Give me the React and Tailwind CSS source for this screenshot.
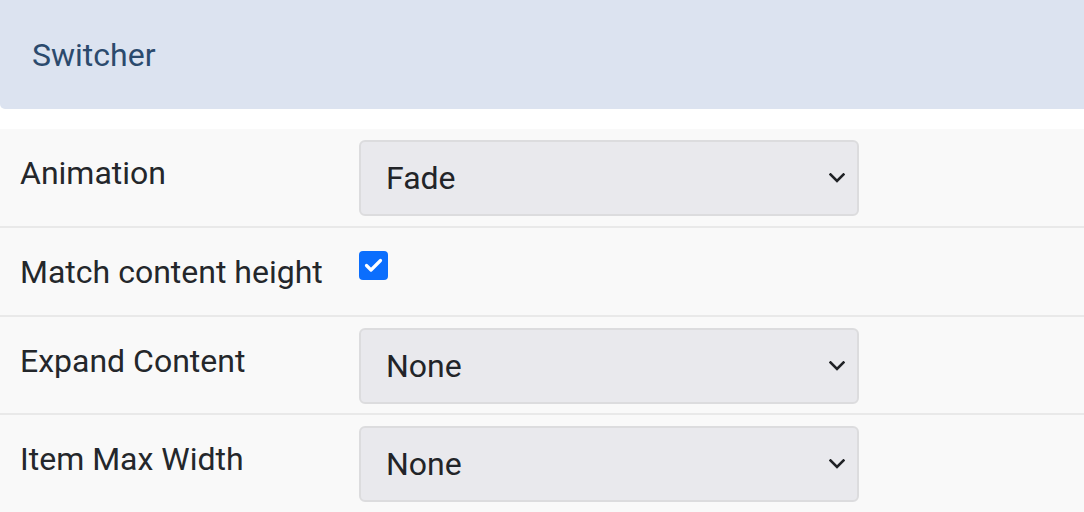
import React from "react";

function Chevron() {
  return (
    <svg width="16" height="10" viewBox="0 0 16 10" className="absolute right-[12px] top-1/2 -translate-y-1/2" fill="none">
      <path d="M1.5 1.5 L8 8 L14.5 1.5" stroke="#1f2125" strokeWidth="2.6" strokeLinecap="square" />
    </svg>
  );
}

function Select({ value, mb }) {
  return (
    <div className={"relative mt-[11px] h-[76px] w-[500px] rounded-[6px] border-2 border-[#dcdcde] bg-[#e9e9ed] flex items-center pl-[25px] text-[32px] text-[#222428] " + (mb || "mb-[10px]")}>
      {value}
      <Chevron />
    </div>
  );
}

function Row({ label, children, last }) {
  return (
    <div className={"flex bg-[#f9f9f9] " + (last ? "" : "border-b-2 border-[#e9e9e9]")}>
      <div className="w-[359px] shrink-0 pl-[20px] pt-[20px] text-[32px] leading-[48px] text-[#24272b]">
        {label}
      </div>
      {children}
    </div>
  );
}

export default function App() {
  return (
    <div className="w-[1084px] h-[512px] overflow-hidden bg-white" style={{ fontFamily: "Roboto, 'Noto Sans', sans-serif" }}>
      <div className="h-[109px] bg-[#dce3f0] rounded-bl-[5px] flex items-center pl-[32px] text-[32px] text-[#2b4a6d]">
        Switcher
      </div>
      <div className="mt-[20px]">
        <Row label="Animation">
          <Select value="Fade" />
        </Row>
        <Row label="Match content height">
          <div className="h-[87px]">
            <div className="mt-[23px] w-[29px] h-[29px] rounded-[4px] bg-[#0b6efd] flex items-center justify-center">
              <svg width="19" height="15" viewBox="0 0 19 15" fill="none">
                <path d="M2.5 7.5 L7 12 L16.5 2.5" stroke="white" strokeWidth="3.2" strokeLinecap="round" strokeLinejoin="round" />
              </svg>
            </div>
          </div>
        </Row>
        <Row label="Expand Content">
          <Select value="None" mb="mb-[9px]" />
        </Row>
        <Row label="Item Max Width" last>
          <Select value="None" />
        </Row>
      </div>
    </div>
  );
}
